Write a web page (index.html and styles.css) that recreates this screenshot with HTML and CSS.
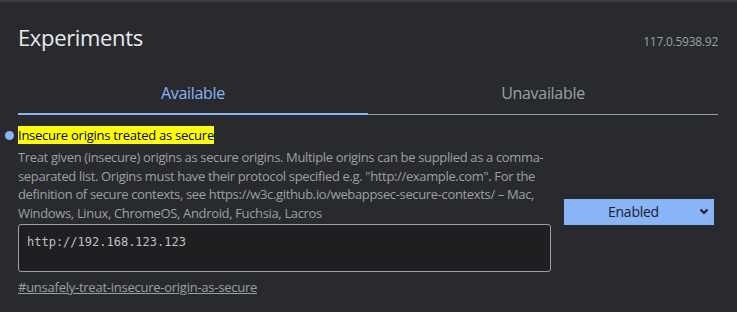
FILE: index.html
```html
<!DOCTYPE html>
<html lang="en">
<head>
    <meta charset="UTF-8">
    <title>Experiments</title>
    <link rel="stylesheet" href="styles.css">
</head>
<body>
    <header class="page-header">
        <h1>Experiments</h1>
        <span class="version">117.0.5938.92</span>
    </header>

    <div class="tabs">
        <div class="tab tab-selected">Available</div>
        <div class="tab">Unavailable</div>
    </div>

    <div class="experiment">
        <div class="experiment-text">
            <h2 class="experiment-name"><span class="match">Insecure origins treated as secure</span></h2>
            <p class="description">Treat given (insecure) origins as secure origins. Multiple origins can be supplied as a comma-separated list. Origins must have their protocol specified e.g. "http://example.com". For the definition of secure contexts, see https://w3c.github.io/webappsec-secure-contexts/ – Mac, Windows, Linux, ChromeOS, Android, Fuchsia, Lacros</p>
            <textarea class="origin-list" spellcheck="false">http://192.168.123.123</textarea>
            <a class="permalink" href="#unsafely-treat-insecure-origin-as-secure">#unsafely-treat-insecure-origin-as-secure</a>
        </div>
        <div class="experiment-actions">
            <div class="select">
                <span>Enabled</span>
                <svg width="10" height="7" viewBox="0 0 10 7"><path d="M1.5 1.5 5 5 8.5 1.5" fill="none" stroke="#202124" stroke-width="2.2"/></svg>
            </div>
        </div>
    </div>
</body>
</html>
```

FILE: styles.css
```css
body {
    margin: 0;
    background-color: #292a2d;
    border-top: 2px solid #3c3d40;
    font-family: "Open Sans", Arial, sans-serif;
    letter-spacing: -0.25px;
    color: #9aa0a6;
    height: 310px;
    overflow: hidden;
}
.page-header {
    display: flex;
    justify-content: space-between;
    align-items: baseline;
    padding: 20px 19px 0 18px;
}
.page-header h1 {
    margin: 0;
    font-size: 22px;
    font-weight: 400;
    letter-spacing: -0.35px;
    color: #e8eaed;
    line-height: 30px;
}
.version {
    font-size: 12px;
    color: #9aa0a6;
}
.tabs {
    display: grid;
    grid-template-columns: 1fr 1fr;
    margin: 30px 19px 0 18px;
}
.tab {
    text-align: center;
    font-size: 16px;
    letter-spacing: -0.3px;
    color: #9aa0a6;
    padding-bottom: 10px;
    border-bottom: 1px solid #9aa0a6;
    line-height: 22px;
}
.tab-selected {
    color: #8ab4f8;
    border-bottom: 2px solid #8ab4f8;
    padding-bottom: 9px;
}
.experiment {
    position: relative;
    display: flex;
    align-items: center;
    padding: 11px 0 0 18px;
}
.experiment::before {
    content: "";
    position: absolute;
    left: 5px;
    top: 16px;
    width: 9px;
    height: 9px;
    border-radius: 50%;
    background-color: #8ab4f8;
}
.experiment-text {
    width: 533px;
}
.experiment-name {
    margin: 0;
    font-size: 13px;
    font-weight: 400;
    line-height: 18px;
    color: #000;
}
.match {
    background-color: #ffff00;
}
.description {
    margin: 4px 0 2px;
    font-size: 13px;
    letter-spacing: -0.35px;
    line-height: 18.5px;
    color: #9aa0a6;
}
.origin-list {
    display: block;
    box-sizing: border-box;
    width: 533px;
    height: 48px;
    margin: 0;
    padding: 10px 8px 6px;
    background-color: #1f1f22;
    border: 1px solid #9aa0a6;
    border-radius: 3px;
    color: #bdc1c6;
    font-family: "DejaVu Sans Mono", monospace;
    font-size: 12px;
    letter-spacing: 0;
    resize: none;
}
.permalink {
    display: inline-block;
    margin-top: 6px;
    font-size: 13px;
    color: #9aa0a6;
}
.experiment-actions {
    margin-left: 13px;
}
.select {
    display: flex;
    align-items: center;
    justify-content: space-between;
    box-sizing: border-box;
    width: 150px;
    height: 26px;
    padding: 0 5px 0 44px;
    background-color: #8ab4f8;
    color: #202124;
    font-size: 14px;
}
```
